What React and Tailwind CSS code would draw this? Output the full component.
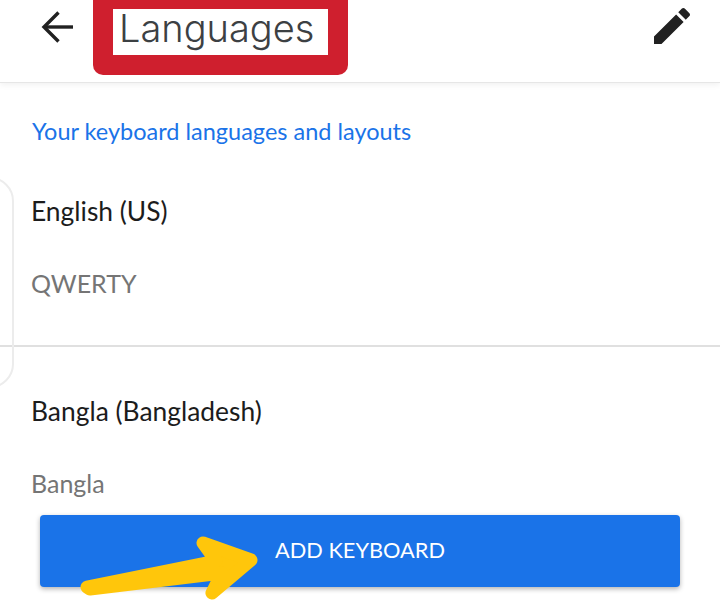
// Languages settings screen with the red and yellow annotations on top.

function BackArrow() {
  return (
    <svg width="36" height="34" viewBox="0 0 36 34" fill="none" stroke="#212121" strokeWidth="3.4">
      <path d="M33 17H4" />
      <path d="M18.5 2.5L4 17l14.5 14.5" />
    </svg>
  );
}

function EditIcon() {
  return (
    <svg width="48" height="48" viewBox="0 0 24 24" fill="#212121">
      <path d="M3 17.25V21h3.75L17.81 9.94l-3.75-3.75L3 17.25zM20.71 7.04c.39-.39.39-1.02 0-1.41l-2.34-2.34c-.39-.39-1.02-.39-1.41 0l-1.83 1.83 3.75 3.75 1.83-1.83z" />
    </svg>
  );
}

function KeyboardRow({ name, layout }) {
  return (
    <div className="h-[198px] pl-[31px] pt-[47px] font-['Lato',sans-serif]">
      <div className="text-[26.4px] leading-[34px] text-[#1c1c1c]">{name}</div>
      <div className="mt-[38px] text-[25px] leading-[34px] text-[#757575]">{layout}</div>
    </div>
  );
}

export default function App() {
  return (
    <div className="relative h-[601px] w-[720px] overflow-hidden bg-white">
      <header className="flex h-[83px] items-start border-b border-[#e6e6e6] shadow-[0_2px_6px_rgba(0,0,0,0.06)]">
        <div className="ml-10 mt-[10px]">
          <BackArrow />
        </div>
        <div className="ml-[17px] h-[75px] w-[255px] rounded-b-[10px] bg-[#cf1f2e] px-5 pt-[9px]">
          <div className="h-[46px] bg-white pl-[6px] text-[38px] font-light leading-[38px] text-[#3c4043] font-['Inter',sans-serif]">
            Languages
          </div>
        </div>
        <div className="ml-auto mr-6 mt-[2px]">
          <EditIcon />
        </div>
      </header>

      <div className="pl-8 pt-[32px] text-[23.5px] leading-8 text-[#1a73e8] font-['Lato',sans-serif]">
        Your keyboard languages and layouts
      </div>

      <div className="mt-[-1px]">
        <div className="border-b-2 border-[#e0e0e0] pt-px">
          <KeyboardRow name="English (US)" layout="QWERTY" />
        </div>
        <KeyboardRow name="Bangla (Bangladesh)" layout="Bangla" />
      </div>

      {/* floating side tab behind the list */}
      <div className="absolute left-[-40px] top-[177px] h-[211px] w-[54px] rounded-r-[24px] border-2 border-[#ececec]" />

      <button className="absolute left-10 top-[515px] flex h-[72px] w-[640px] items-center justify-center rounded-[4px] bg-[#1a73e8] pb-[2px] text-[21.75px] text-white shadow-[0_2px_5px_rgba(0,0,0,0.3)] font-['Lato',sans-serif]">
        ADD KEYBOARD
      </button>

      <svg className="absolute left-0 top-0" width="720" height="601" viewBox="0 0 720 601" fill="#ffc60b">
        <path
          d="M87 587L216 561L203 543L251 560L212 593L222 573L90 589Z"
          stroke="#ffc60b"
          strokeWidth="13"
          strokeLinejoin="round"
        />
      </svg>
    </div>
  );
}
